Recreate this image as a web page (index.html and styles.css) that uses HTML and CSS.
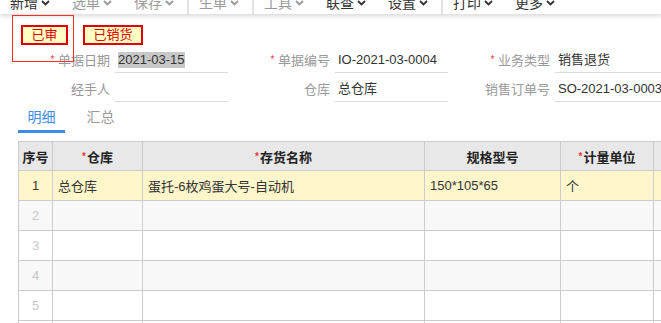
FILE: index.html
```html
<!DOCTYPE html>
<html>
<head>
<meta charset="utf-8">
<link rel="stylesheet" href="styles.css">
</head>
<body>
<div class="toolbar">
  <div class="tb-inner">
    <span class="tb-item on">新增<svg class="chev" viewBox="0 0 9 6" width="9" height="6"><polyline points="1,1 4.5,4.5 8,1"/></svg></span>
    <span class="tb-item">选单<svg class="chev" viewBox="0 0 9 6" width="9" height="6"><polyline points="1,1 4.5,4.5 8,1"/></svg></span>
    <span class="tb-item short">保存<svg class="chev" viewBox="0 0 9 6" width="9" height="6"><polyline points="1,1 4.5,4.5 8,1"/></svg></span>
    <span class="tb-sep"></span>
    <span class="tb-item short">生单<svg class="chev" viewBox="0 0 9 6" width="9" height="6"><polyline points="1,1 4.5,4.5 8,1"/></svg></span>
    <span class="tb-sep"></span>
    <span class="tb-item">工具<svg class="chev" viewBox="0 0 9 6" width="9" height="6"><polyline points="1,1 4.5,4.5 8,1"/></svg></span>
    <span class="tb-item on">联查<svg class="chev" viewBox="0 0 9 6" width="9" height="6"><polyline points="1,1 4.5,4.5 8,1"/></svg></span>
    <span class="tb-item on short">设置<svg class="chev" viewBox="0 0 9 6" width="9" height="6"><polyline points="1,1 4.5,4.5 8,1"/></svg></span>
    <span class="tb-sep"></span>
    <span class="tb-item on">打印<svg class="chev" viewBox="0 0 9 6" width="9" height="6"><polyline points="1,1 4.5,4.5 8,1"/></svg></span>
    <span class="tb-item on">更多<svg class="chev" viewBox="0 0 9 6" width="9" height="6"><polyline points="1,1 4.5,4.5 8,1"/></svg></span>
  </div>
</div>

<div class="page">
  <div class="badges">
    <span class="badge b1">已审</span>
    <span class="badge b2">已销货</span>
  </div>

  <div class="form">
    <div class="field">
      <label class="lbl"><i class="req">*</i> 单据日期</label>
      <div class="inp"><span class="sel">2021-03-15</span></div>
    </div>
    <div class="field">
      <label class="lbl"><i class="req">*</i> 单据编号</label>
      <div class="inp">IO-2021-03-0004</div>
    </div>
    <div class="field">
      <label class="lbl"><i class="req">*</i> 业务类型</label>
      <div class="inp">销售退货</div>
    </div>
    <div class="field">
      <label class="lbl">经手人</label>
      <div class="inp"></div>
    </div>
    <div class="field">
      <label class="lbl">仓库</label>
      <div class="inp">总仓库</div>
    </div>
    <div class="field">
      <label class="lbl">销售订单号</label>
      <div class="inp">SO-2021-03-0003</div>
    </div>
  </div>

  <div class="tabs">
    <span class="tab active">明细</span>
    <span class="tab">汇总</span>
  </div>

  <div class="grid">
    <div class="row head">
      <div class="c c1">序号</div>
      <div class="c c2 ctr"><i class="req">*</i>仓库</div>
      <div class="c c3 ctr"><i class="req">*</i>存货名称</div>
      <div class="c c4 ctr">规格型号</div>
      <div class="c c5 ctr"><i class="req">*</i>计量单位</div>
      <div class="c c6"></div>
    </div>
    <div class="row cur">
      <div class="c c1">1</div>
      <div class="c c2">总仓库</div>
      <div class="c c3">蛋托-6枚鸡蛋大号-自动机</div>
      <div class="c c4">150*105*65</div>
      <div class="c c5">个</div>
      <div class="c c6"></div>
    </div>
    <div class="row alt">
      <div class="c c1 num">2</div>
      <div class="c c2"></div>
      <div class="c c3"></div>
      <div class="c c4"></div>
      <div class="c c5"></div>
      <div class="c c6"></div>
    </div>
    <div class="row">
      <div class="c c1 num">3</div>
      <div class="c c2"></div>
      <div class="c c3"></div>
      <div class="c c4"></div>
      <div class="c c5"></div>
      <div class="c c6"></div>
    </div>
    <div class="row alt">
      <div class="c c1 num">4</div>
      <div class="c c2"></div>
      <div class="c c3"></div>
      <div class="c c4"></div>
      <div class="c c5"></div>
      <div class="c c6"></div>
    </div>
    <div class="row">
      <div class="c c1 num">5</div>
      <div class="c c2"></div>
      <div class="c c3"></div>
      <div class="c c4"></div>
      <div class="c c5"></div>
      <div class="c c6"></div>
    </div>
    <div class="row">
      <div class="c c1 num">6</div>
      <div class="c c2"></div>
      <div class="c c3"></div>
      <div class="c c4"></div>
      <div class="c c5"></div>
      <div class="c c6"></div>
    </div>
  </div>
  <div class="mark-box"></div>
</div>
</body>
</html>
```

FILE: styles.css
```css
* { box-sizing: border-box; }
html, body {
  margin: 0;
  padding: 0;
  width: 661px;
  height: 323px;
  overflow: hidden;
  background: #fff;
  font-family: "Liberation Sans", "Noto Sans CJK SC", sans-serif;
  font-size: 13px;
  color: #333;
}
.toolbar {
  height: 14px;
  overflow: hidden;
  background: #fff;
  box-shadow: 0 2px 5px rgba(0,0,0,0.16);
  position: relative;
  z-index: 2;
}
.tb-inner {
  display: flex;
  align-items: center;
  margin-top: -9px;
  padding-left: 10px;
  height: 24px;
  font-size: 14px;
  line-height: 20px;
  white-space: nowrap;
}
.tb-item {
  display: inline-flex;
  align-items: center;
  width: 62px;
  flex: none;
  color: #9a9a9a;
}
.tb-item.short { width: 53px; }
.tb-item.on { color: #333; }
.chev {
  margin-left: 3px;
  margin-top: 0;
  fill: none;
  stroke: currentColor;
  stroke-width: 1.8;
}
.tb-sep {
  flex: none;
  width: 2px;
  height: 30px;
  background: #e2e2e2;
  margin-right: 10px;
}
.page {
  position: relative;
}
.mark-box {
  position: absolute;
  left: 12px;
  top: 1px;
  width: 62px;
  height: 47px;
  border: 1px solid #ff2a2a;
  z-index: 3;
}
.badges {
  display: flex;
  gap: 15px;
  padding: 11px 0 0 21px;
  height: 34px;
}
.badge {
  display: inline-flex;
  align-items: center;
  justify-content: center;
  height: 20px;
  border: 2px solid #e00000;
  background: #ffffc4;
  color: #e00000;
  font-size: 13px;
  line-height: 16px;
}
.b1 { width: 47px; }
.b2 { width: 60px; }
.form {
  display: grid;
  grid-template-columns: 220px 220px 220px;
  row-gap: 4px;
  padding-left: 8px;
  width: 900px;
}
.field {
  display: flex;
  align-items: center;
  height: 25px;
  gap: 5px;
}
.lbl {
  width: 102px;
  flex: none;
  text-align: right;
  color: #999;
  font-size: 13px;
  line-height: 20px;
  white-space: nowrap;
}
.req {
  font-style: normal;
  color: #e8383d;
  font-size: 10px;
  vertical-align: 2px;
}
.inp {
  width: 113px;
  flex: none;
  height: 25px;
  border-bottom: 1px solid #ddd;
  padding: 3px 0 0 3px;
  line-height: 18px;
  color: #333;
  white-space: nowrap;
}
.sel {
  background: #c8c8c8;
  display: inline-block;
  line-height: 16px;
}
.tabs {
  display: flex;
  gap: 12px;
  padding-left: 18px;
  margin-top: 0px;
}
.tab {
  width: 47px;
  text-align: center;
  font-size: 14px;
  line-height: 20px;
  padding-top: 5px;
  padding-bottom: 3px;
  border-bottom: 3px solid transparent;
  color: #999;
}
.tab.active {
  color: #3b8bea;
  border-bottom-color: #3b8bea;
}
.grid {
  margin-top: 8px;
  margin-left: 18px;
  border-top: 1px solid #ccc;
  border-left: 1px solid #ccc;
  width: 740px;
}
.row {
  display: flex;
  height: 30px;
  border-bottom: 1px solid #ccc;
}
.row.head {
  height: 29px;
  background: #e8e8e8;
  font-weight: bold;
  color: #222;
}
.row.cur { background: #fff6cc; }
.row.alt { background: #f8f8f8; }
.c {
  flex: none;
  border-right: 1px solid #ccc;
  display: flex;
  align-items: center;
  padding-left: 5px;
  white-space: nowrap;
}
.c1 { width: 34px; justify-content: center; padding-left: 0; }
.c2 { width: 90px; }
.c3 { width: 282px; }
.c4 { width: 136px; }
.c5 { width: 93px; }
.c6 { width: 100px; }
.ctr { justify-content: center; padding-left: 0; }
.head .req { vertical-align: 3px; margin-right: 1px; }
.num { color: #c8c8c8; }
```
